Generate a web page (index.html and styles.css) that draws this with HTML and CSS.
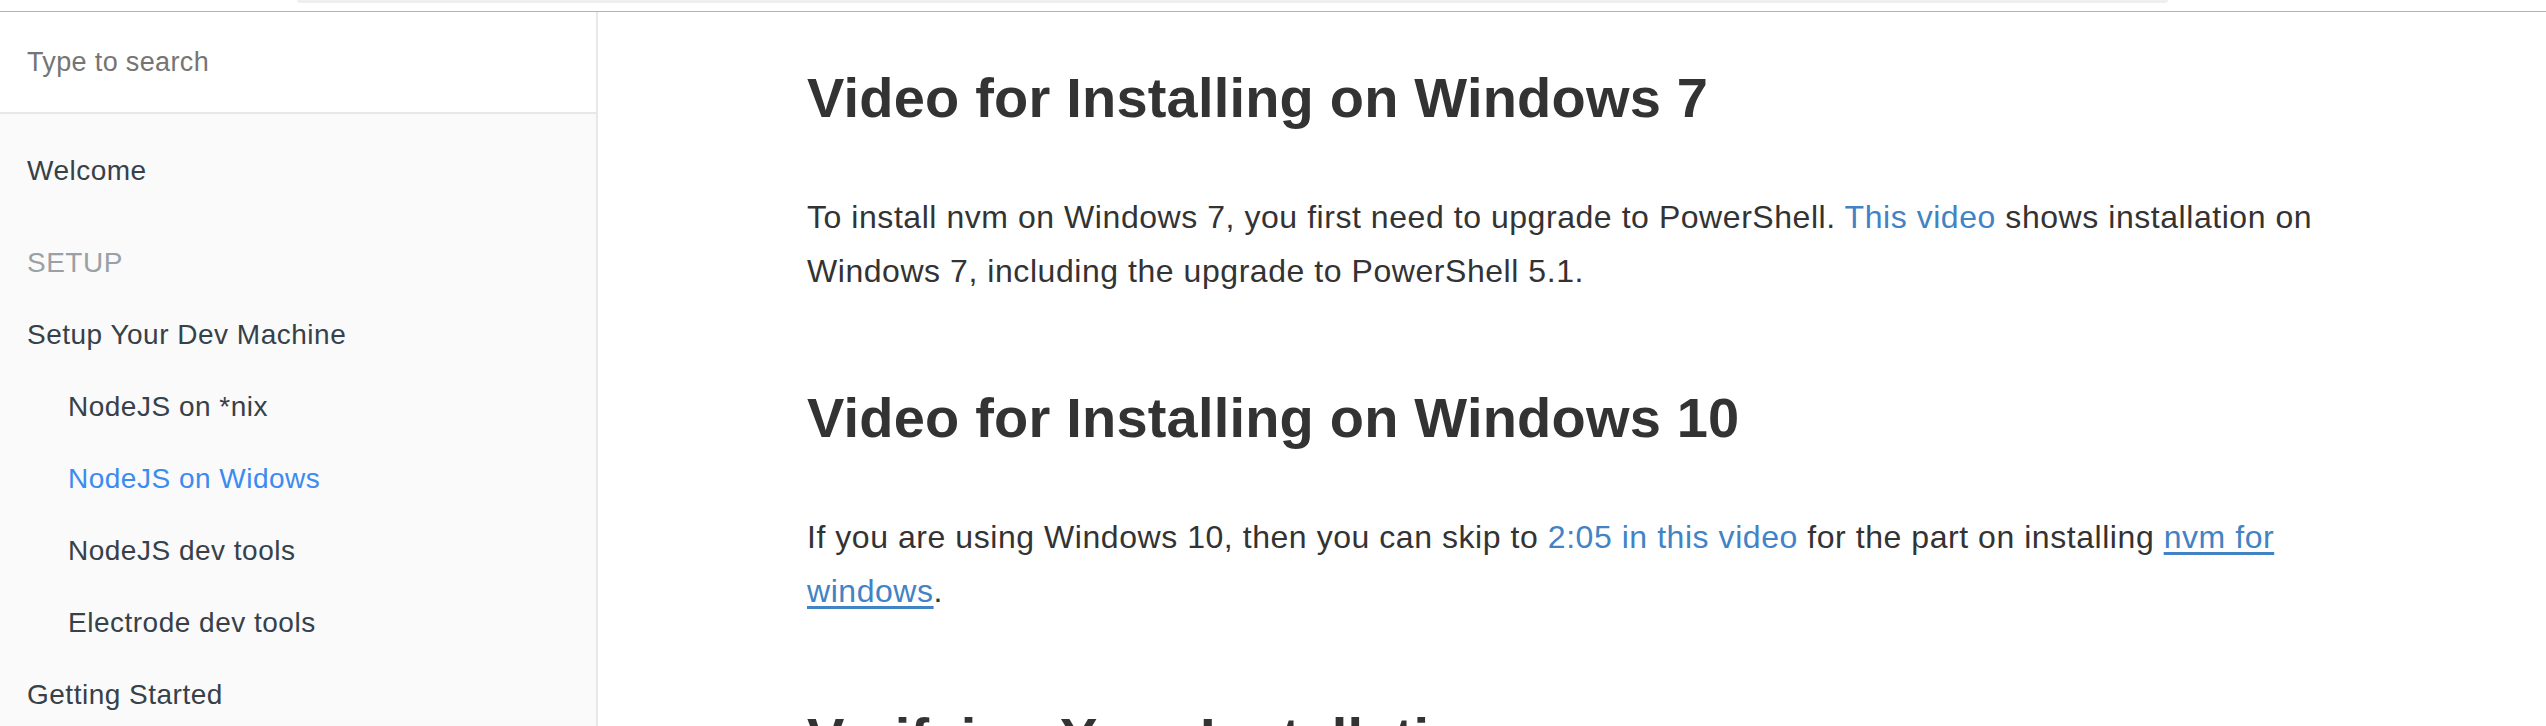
FILE: index.html
```html
<!DOCTYPE html>
<html>
<head>
<meta charset="utf-8">
<link rel="stylesheet" href="styles.css">
</head>
<body>
<div class="topbar"><div class="topbar-strip"></div></div>
<div class="book">
  <aside class="summary">
    <div class="search"><span class="search-placeholder">Type to search</span></div>
    <ul class="nav">
      <li class="nav-item">Welcome</li>
      <li class="divider"></li>
      <li class="nav-header">Setup</li>
      <li class="nav-item">Setup Your Dev Machine</li>
      <li class="nav-item sub">NodeJS on *nix</li>
      <li class="nav-item sub active">NodeJS on Widows</li>
      <li class="nav-item sub">NodeJS dev tools</li>
      <li class="nav-item sub">Electrode dev tools</li>
      <li class="nav-item">Getting Started</li>
    </ul>
  </aside>
  <main class="body">
    <section class="page-inner">
      <h2 class="first">Video for Installing on Windows 7</h2>
      <p>To install nvm on Windows 7, you first need to upgrade to PowerShell. <a class="link">This video</a> shows installation on Windows 7, including the upgrade to PowerShell 5.1.</p>
      <h2>Video for Installing on Windows 10</h2>
      <p>If you are using Windows 10, then you can skip to <a class="link">2:05 in this video</a> for the part on installing <a class="link underline">nvm for windows</a>.</p>
      <h2>Verifying Your Installation</h2>
    </section>
  </main>
</div>
</body>
</html>
```

FILE: styles.css
```css
html, body {
  margin: 0;
  padding: 0;
  background: #ffffff;
}
body {
  font-family: "Liberation Sans", Arial, sans-serif;
  width: 2546px;
  height: 726px;
  overflow: hidden;
}
.topbar {
  height: 11px;
  border-bottom: 1px solid #b3b3b3;
  display: flex;
  justify-content: flex-start;
}
.topbar-strip {
  margin-left: 297px;
  width: 1871px;
  height: 3px;
  background: #efefef;
  border-radius: 0 0 6px 6px;
}
.book {
  display: flex;
  height: 714px;
  overflow: hidden;
}
.summary {
  width: 596px;
  flex: 0 0 596px;
  border-right: 2px solid #e8e8e8;
  background: #fafafa;
  display: flex;
  flex-direction: column;
  overflow: hidden;
}
.search {
  flex: 0 0 auto;
  height: 100px;
  background: #ffffff;
  border-bottom: 2px solid #e8e8e8;
  display: flex;
  align-items: center;
  padding-left: 27px;
}
.search-placeholder {
  font-size: 27px;
  letter-spacing: 0.35px;
  color: #757575;
}
.nav {
  flex: 0 0 auto;
  list-style: none;
  margin: 0;
  padding: 21px 0 0 0;
}
.nav-item, .nav-header {
  height: 72px;
  display: flex;
  align-items: center;
  padding-left: 27px;
  font-size: 28px;
  letter-spacing: 0.5px;
  color: #364149;
}
.nav-header {
  text-transform: uppercase;
  color: #9aa1a6;
}
.nav-item.sub {
  padding-left: 68px;
}
.nav-item.active {
  color: #3b8bf0;
}
.divider {
  height: 20px;
}
.body {
  flex: 1;
  padding: 38px 0 0 209px;
  color: #333333;
  overflow: hidden;
}
.page-inner {
  max-width: 1590px;
}
h2 {
  font-size: 56px;
  line-height: 95px;
  font-weight: 700;
  letter-spacing: 0.2px;
  margin: 72px 0 45px 0;
  color: #333333;
}
h2.first {
  margin-top: 0;
}
p {
  font-size: 32px;
  line-height: 54px;
  letter-spacing: 0.55px;
  margin: 0 0 27px 0;
}
.link {
  color: #4183c4;
  text-decoration: none;
}
.link.underline {
  text-decoration: underline;
  text-underline-offset: 4px;
}
```
